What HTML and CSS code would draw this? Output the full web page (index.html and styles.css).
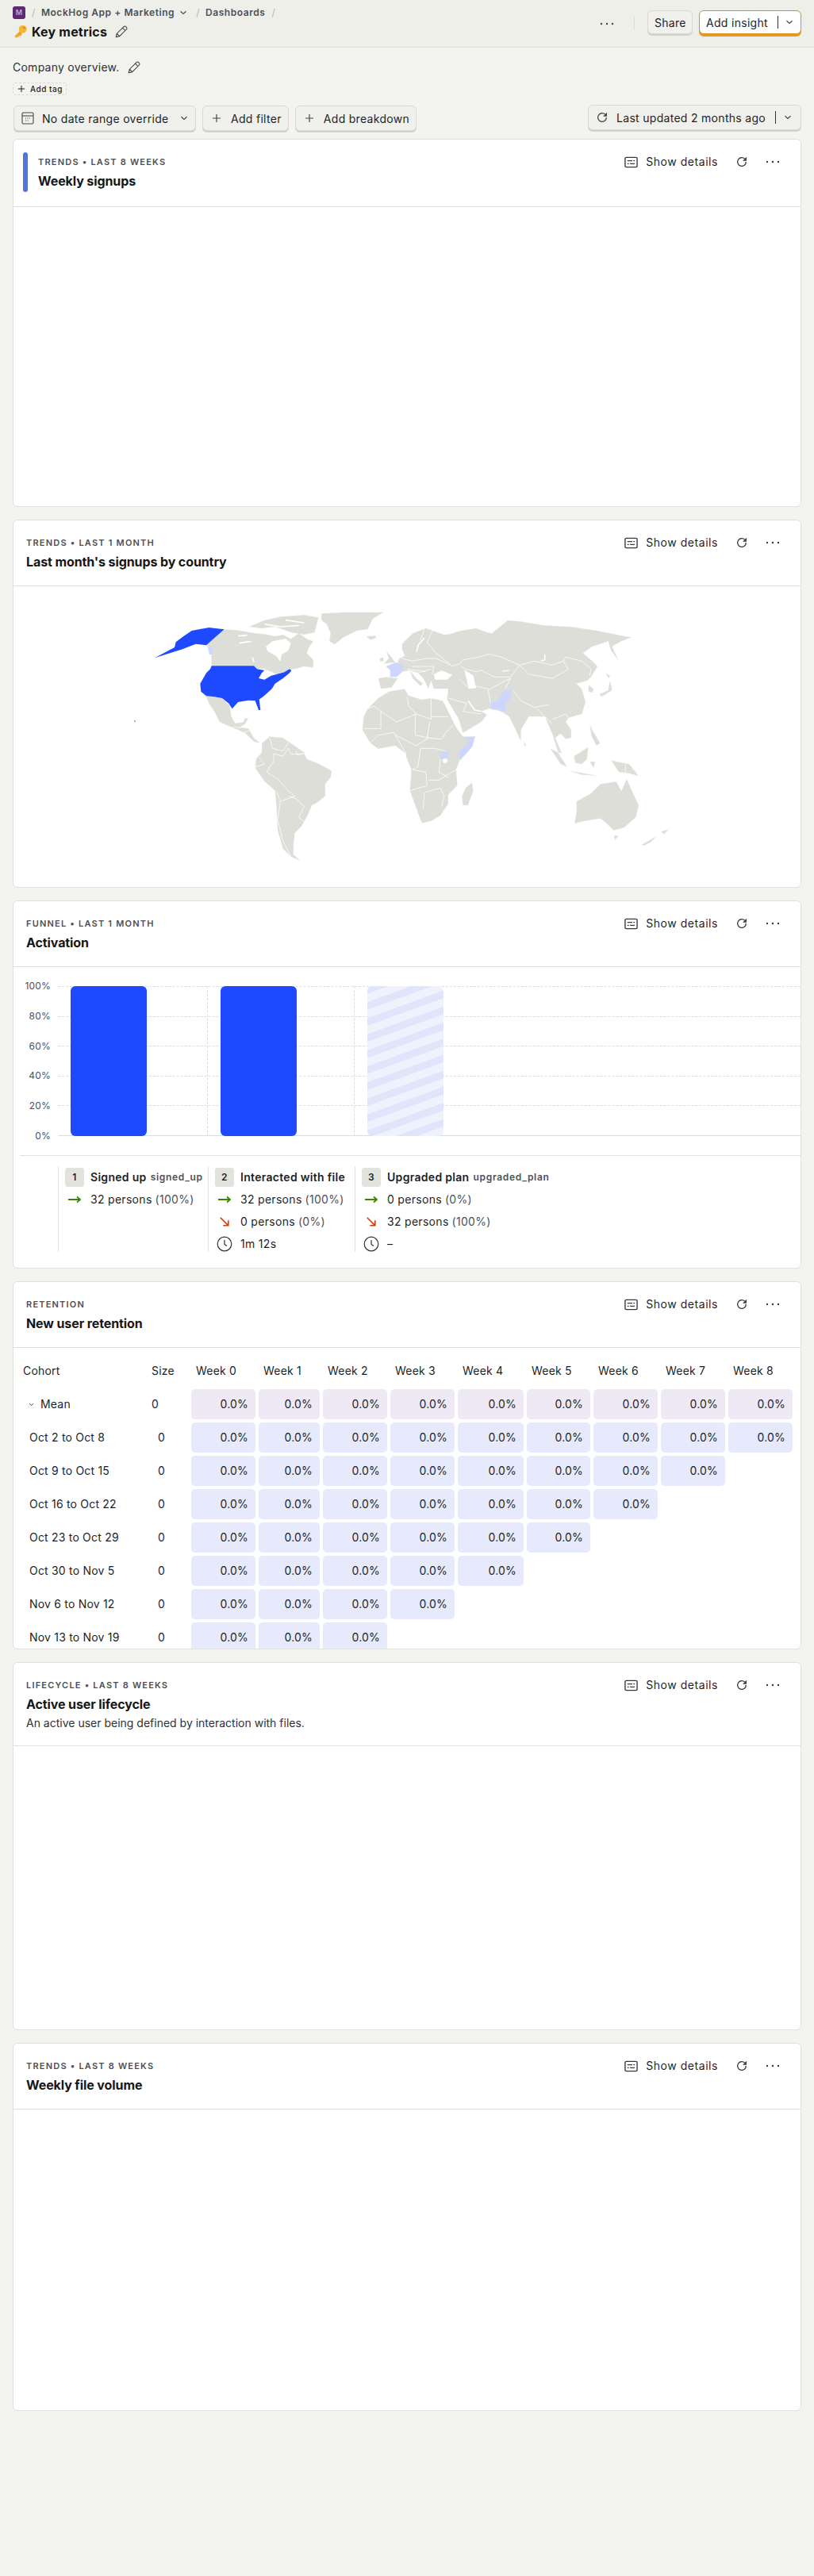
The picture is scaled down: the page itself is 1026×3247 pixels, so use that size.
FILE: index.html
```html
<!DOCTYPE html>
<html lang="en">
  <head>
    <meta charset="UTF-8" />
    <title>Key metrics</title>
    <link rel="stylesheet" href="styles.css">
  </head>
  <body>
    <svg class="icon-defs" width="0" height="0">
      <symbol id="i-pencil" viewBox="0 0 24 24"><path d="M3 21l1.5-6L16 3.5a2.4 2.4 0 0 1 3.4 0l1.1 1.1a2.4 2.4 0 0 1 0 3.4L9 19.500zM14 5.500l4.500 4.500M4.500 15l4.500 4.500" fill="none" stroke="currentColor" stroke-width="1.4" stroke-linejoin="round"/></symbol>
      <symbol id="i-refresh" viewBox="0 0 24 24"><path d="M20 12a8 8 0 1 1-2.600-5.900" fill="none" stroke="currentColor" stroke-width="2"/><path d="M21 2.500V10h-7.500z" fill="currentColor"/></symbol>
      <symbol id="i-dots" viewBox="0 0 18 4"><circle cx="2" cy="2" r="1.200" fill="currentColor"/><circle cx="9" cy="2" r="1.200" fill="currentColor"/><circle cx="16" cy="2" r="1.200" fill="currentColor"/></symbol>
      <symbol id="i-chevron" viewBox="0 0 10 6"><path d="M1.500 1.200L5 4.500l3.500-3.300" fill="none" stroke="currentColor" stroke-width="1.200"/></symbol>
      <symbol id="i-plus" viewBox="0 0 12 12"><path d="M6 1v10M1 6h10" fill="none" stroke="currentColor" stroke-width="1.200"/></symbol>
      <symbol id="i-details" viewBox="0 0 18 15"><rect x="1" y="1" width="16" height="13" rx="1.500" fill="none" stroke="currentColor" stroke-width="1.500"/><path d="M4 5.500h6.500M12 5.500h2M4 9.500h2M7.500 9.500H14" fill="none" stroke="currentColor" stroke-width="1.400"/></symbol>
      <symbol id="i-calendar" viewBox="0 0 16 16"><rect x="1" y="1" width="14" height="14" rx="1.500" fill="none" stroke="currentColor" stroke-width="1.100"/><path d="M1 5h14" stroke="currentColor" stroke-width="1.100"/><path d="M5 8h1M7.500 8h1M10 8h1M5 11h1M7.500 11h1" stroke="currentColor" stroke-width="1"/></symbol>
      <symbol id="i-right" viewBox="0 0 18 12"><path d="M1 6h15M12 2.500L16 6l-4 3.500" fill="none" stroke="#388600" stroke-width="1.800"/></symbol>
      <symbol id="i-down" viewBox="0 0 16 16"><path d="M2 2l11 11M13.500 6v7.500H6" fill="none" stroke="#db3707" stroke-width="1.800"/></symbol>
      <symbol id="i-clock" viewBox="0 0 20 20"><circle cx="10" cy="10" r="8.800" fill="none" stroke="#333" stroke-width="1.200"/><path d="M10 5v5.500l3 2" fill="none" stroke="#333" stroke-width="1.200"/></symbol>
    </svg>

    <header class="topbar">
      <div class="topbar-left">
        <div class="crumbs">
          <span class="avatar">M</span>
          <span class="slash">/</span>
          <span class="crumb">MockHog App + Marketing</span>
          <svg class="crumb-chevron"><use href="#i-chevron"/></svg>
          <span class="slash">/</span>
          <span class="crumb">Dashboards</span>
          <span class="slash">/</span>
        </div>
        <div class="page-title">
          <svg class="key" viewBox="0 0 20 20">
            <path d="M10 8L1.500 16.500l1.500 2 1.500-1 1 .5 1-1.500 1 .5 1-1.500 1 .5 2.500-2.500z" fill="#f0a52a"/>
            <circle cx="13" cy="6.500" r="5.500" fill="#f5b733"/>
            <circle cx="15" cy="4.500" r="1.400" fill="#c9861a"/>
          </svg>
          <h1>Key metrics</h1>
          <svg class="pencil"><use href="#i-pencil"/></svg>
        </div>
      </div>
      <div class="topbar-right">
        <svg class="top-dots"><use href="#i-dots"/></svg>
        <span class="vline"></span>
        <button class="btn btn-share">Share</button>
        <button class="btn btn-primary">Add insight<span class="btn-split"></span><svg class="btn-chevron"><use href="#i-chevron"/></svg></button>
      </div>
    </header>

    <main class="page">
      <div class="description">Company overview.<svg class="pencil"><use href="#i-pencil"/></svg></div>
      <div class="add-tag"><svg class="tag-plus"><use href="#i-plus"/></svg>Add tag</div>

      <div class="filters">
        <div class="filters-left">
          <button class="btn btn-date"><svg class="btn-cal"><use href="#i-calendar"/></svg>No date range override<svg class="btn-chevron date-chevron"><use href="#i-chevron"/></svg></button>
          <button class="btn btn-add"><svg class="btn-plus"><use href="#i-plus"/></svg>Add filter</button>
          <button class="btn btn-add"><svg class="btn-plus"><use href="#i-plus"/></svg>Add breakdown</button>
        </div>
        <button class="btn btn-updated"><svg class="btn-refresh"><use href="#i-refresh"/></svg>Last updated 2 months ago<span class="btn-split"></span><svg class="btn-chevron"><use href="#i-chevron"/></svg></button>
      </div>

      <div class="cards">
        <!-- weekly signups -->
        <section class="card">
          <div class="card-head">
            <span class="ribbon"></span>
            <div class="card-text">
              <div class="meta">Trends • Last 8 weeks</div>
              <h2>Weekly signups</h2>
            </div>
            <div class="card-actions">
              <svg class="a-details"><use href="#i-details"/></svg><span>Show details</span>
              <svg class="a-refresh"><use href="#i-refresh"/></svg>
              <svg class="a-dots"><use href="#i-dots"/></svg>
            </div>
          </div>
        </section>

        <!-- world map -->
        <section class="card">
          <div class="card-head">
            <div class="card-text">
              <div class="meta">Trends • Last 1 month</div>
              <h2>Last month's signups by country</h2>
            </div>
            <div class="card-actions">
              <svg class="a-details"><use href="#i-details"/></svg><span>Show details</span>
              <svg class="a-refresh"><use href="#i-refresh"/></svg>
              <svg class="a-dots"><use href="#i-dots"/></svg>
            </div>
          </div>
          <svg class="map" viewBox="0 0 2976 1137">
            <g transform="translate(249 3)">
              <g class="land">
                <polygon points="548,160 600,163 650,172 700,178 740,185 770,180 800,195 830,175 860,195 885,205 870,225 860,250 885,275 885,305 850,300 820,310 795,312 775,322 745,330 725,320 695,308 672,310 660,298 500,298 497,250 480,220"/>
                <polygon points="640,150 700,125 760,112 850,105 905,115 895,150 890,172 850,180 800,172 740,150 690,157"/>
                <polygon points="915,100 1000,95 1150,95 1110,120 1090,160 1050,165 1000,190 965,217 945,205 950,175 935,140 915,125"/>
                <polygon points="1085,187 1120,183 1122,193 1100,200"/>
                <polygon points="478,412 510,415 540,420 570,450 575,490 590,515 620,510 625,495 640,497 625,520 610,530 575,530 530,510 510,470 490,440"/>
                <polygon points="575,530 610,530 640,535 660,570 685,590 660,585 630,555 600,540"/>
                <polygon points="690,590 720,565 770,570 800,590 850,625 860,650 900,665 955,695 950,720 930,745 930,790 900,815 880,825 865,860 840,905 815,930 810,975 810,1010 835,1035 800,1020 770,990 750,920 745,830 740,770 700,735 665,685 668,650 690,625"/>
              </g>
              <g class="sea">
                <polygon points="705,225 730,205 780,195 800,212 790,240 765,255 760,282 745,262 712,242"/>
                <polyline points="600,185 635,182"/>
                <polyline points="605,212 650,205"/>
                <polyline points="700,140 760,150 830,145"/>
                <polyline points="780,125 850,135"/>
                <polyline points="655,265 660,285"/>
                <polyline points="490,225 497,250 495,300"/>
              </g>
              <polygon class="blue" points="285,268 360,228 365,208 395,185 425,165 490,153 548,160 480,220 440,215 390,235"/>
              <polygon class="blue" points="500,298 660,298 672,310 700,315 690,325 678,345 700,350 725,335 745,330 775,322 795,310 802,315 795,325 770,345 740,365 728,385 700,410 680,425 685,465 678,465 665,430 640,428 600,435 578,460 565,440 540,420 510,415 480,412 460,395 457,365 480,325 495,310"/>
              <polygon class="blue" points="207,503 213,507 210,511"/>
              <polygon class="pale" points="485,225 503,228 503,255 492,255"/>
              <g class="borders">
                <polyline points="745,770 760,810 750,880 770,960 800,1020"/>
                <polyline points="740,720 710,700 720,680 735,660 735,630 770,640 790,610 800,632 850,630"/>
                <polyline points="665,680 700,670 680,645"/>
                <polyline points="790,790 820,800 850,830 830,870 860,895 840,905"/>
                <polyline points="745,720 790,770 815,790 790,800 760,810"/>
                <polyline points="720,570 730,610 770,620 790,590"/>
                <polyline points="820,620 825,635 850,630"/>
                <polyline points="600,535 625,520"/>
                <polyline points="610,555 650,540"/>
              </g>
            </g>

            <g transform="translate(1449 3)">
              <g class="land">
                <polygon points="-70,345 -40,340 5,345 -20,380 -60,385"/>
                <polygon points="-40,240 -20,265 -5,285 -50,290 -30,270"/>
                <polygon points="-65,270 -50,265 -50,280 -62,282"/>
                <polygon points="50,315 75,345 100,365 90,375 60,345"/>
                <polygon points="-125,490 -110,460 -70,420 -30,395 30,385 45,410 95,425 130,420 175,430 200,480 225,530 250,565 295,565 285,600 240,650 225,690 230,750 195,785 195,820 165,865 130,885 95,893 75,840 50,770 55,690 35,640 35,630 -5,600 -70,612 -100,590 -130,540"/>
                <polygon points="0,290 10,270 30,260 20,235 20,215 60,175 110,155 180,180 200,178 240,165 300,155 340,170 360,175 420,125 470,130 560,145 660,150 760,165 860,185 890,190 850,205 815,225 840,280 810,240 800,205 770,215 740,225 705,250 740,280 760,300 735,340 720,355 680,365 700,385 715,435 700,480 650,495 640,510 660,540 660,570 640,575 620,555 600,570 625,630 610,625 590,560 575,525 560,490 530,490 500,490 470,540 470,585 445,530 425,490 395,470 350,460 320,470 342,482 320,510 250,552 235,500 190,425 195,385 140,385 130,355 120,385 100,345 80,325 50,315 20,320"/>
                <polygon points="285,738 290,770 270,825 250,825 247,790 260,760"/>
                <polygon points="480,582 490,600 483,603"/>
                <polygon points="765,405 800,390 805,355 795,335 810,365 815,390 775,415"/>
                <polygon points="790,325 808,335 800,345"/>
                <polygon points="725,370 745,385 740,400 725,395"/>
                <polygon points="580,610 610,625 645,680 620,670"/>
                <polygon points="645,692 700,703 770,715 700,710"/>
                <polygon points="670,640 700,620 725,605 720,650 700,670 675,665"/>
                <polygon points="730,518 740,540 770,590 755,600 735,560"/>
                <polygon points="730,660 750,660 745,685"/>
                <polygon points="810,655 880,670 915,715 880,705 840,700"/>
                <polygon points="680,810 735,780 770,745 830,735 850,770 870,725 890,770 915,825 905,870 860,910 820,920 790,890 770,875 710,885 672,895 680,850"/>
                <polygon points="820,940 840,940 825,957"/>
                <polygon points="925,975 985,940 960,965 935,978"/>
                <polygon points="1000,925 1030,915 1010,935"/>
              </g>
              <g class="sea">
                <polygon points="140,330 170,315 210,332 190,350 145,350"/>
                <polygon points="255,312 290,335 300,382 272,385 265,350"/>
                <polyline points="105,192 82,218 75,245"/>
                <polyline points="270,430 295,465 320,470"/>
                <polyline points="560,255 560,275 545,280"/>
                <polyline points="400,318 425,315"/>
              </g>
              <polygon class="pale" points="-40,300 -5,285 25,295 22,320 0,340 -25,340 -25,315"/>
              <polygon class="pale" points="355,440 385,425 410,385 435,395 425,425 410,445 415,470 395,470 375,460 360,465"/>
              <polygon class="pale" points="250,570 297,565 285,605 240,655 235,625 265,595 275,580"/>
              <polygon class="pale" points="170,622 195,620 193,645 165,653"/>
              <g class="sea"><circle cx="183" cy="657" r="9"/></g>
              <g class="borders">
                <polyline points="40,415 45,450 75,480 130,500 130,420"/>
                <polyline points="130,490 195,490"/>
                <polyline points="75,480 0,510 -60,470 -85,450 -110,460"/>
                <polyline points="70,480 70,560 120,570 75,600 -5,560"/>
                <polyline points="125,510 115,570 170,575 190,545 215,520"/>
                <polyline points="185,620 145,610 90,610 80,680 60,690 110,700 115,750 50,770"/>
                <polyline points="105,775 100,840"/>
                <polyline points="110,775 165,760 180,790 170,830"/>
                <polyline points="120,730 160,730 190,710 225,690"/>
                <polyline points="165,650 160,700 195,720"/>
                <polyline points="-125,535 -60,535 -60,470"/>
                <polyline points="-100,590 -70,560 -10,550 35,630"/>
                <polyline points="205,300 240,290 250,275 310,265 350,253 395,265 465,295 520,280 590,295 630,280 640,265 700,280 735,310 730,335"/>
                <polyline points="465,295 500,330 590,345 650,310 630,280"/>
                <polyline points="245,300 260,310 300,320 320,315 370,340 430,340 465,295"/>
                <polyline points="240,350 270,380 300,375 345,385 355,440"/>
                <polyline points="345,390 400,360 430,345 410,385"/>
                <polyline points="195,420 265,440 250,470 320,480"/>
                <polyline points="440,390 470,430 520,455 575,445"/>
                <polyline points="530,460 560,490 590,520"/>
                <polyline points="590,500 640,480 660,510"/>
                <polyline points="20,270 60,280 110,270 150,270 205,295"/>
                <polyline points="60,300 140,300 135,330"/>
                <polyline points="80,325 130,310"/>
                <polyline points="40,310 110,320"/>
                <polyline points="105,160 90,200"/>
                <polyline points="135,165 115,210 150,250 205,295"/>
                <polyline points="865,670 865,705"/>
              </g>
            </g>
          </svg>
        </section>

        <!-- funnel -->
        <section class="card">
          <div class="card-head">
            <div class="card-text">
              <div class="meta">Funnel • Last 1 month</div>
              <h2>Activation</h2>
            </div>
            <div class="card-actions">
              <svg class="a-details"><use href="#i-details"/></svg><span>Show details</span>
              <svg class="a-refresh"><use href="#i-refresh"/></svg>
              <svg class="a-dots"><use href="#i-dots"/></svg>
            </div>
          </div>
          <div class="funnel">
            <div class="funnel-axis">
              <span>100%</span><span>80%</span><span>60%</span><span>40%</span><span>20%</span><span>0%</span>
            </div>
            <div class="funnel-plot">
              <div class="gridlines"><i></i><i></i><i></i><i></i><i></i><i class="base"></i></div>
              <div class="funnel-col"><div class="bar"></div></div>
              <div class="funnel-col col-mid"><div class="bar"></div></div>
              <div class="funnel-col col-last"><div class="bar bar-empty"></div></div>
            </div>
          </div>
          <div class="legend">
            <div class="step">
              <div class="step-row"><span class="step-num">1</span><b>Signed up</b><span class="event">signed_up</span></div>
              <div class="step-row"><svg class="s-right"><use href="#i-right"/></svg>32 persons<span class="pct">(100%)</span></div>
            </div>
            <div class="step">
              <div class="step-row"><span class="step-num">2</span><b>Interacted with file</b></div>
              <div class="step-row"><svg class="s-right"><use href="#i-right"/></svg>32 persons<span class="pct">(100%)</span></div>
              <div class="step-row"><svg class="s-down"><use href="#i-down"/></svg>0 persons<span class="pct">(0%)</span></div>
              <div class="step-row"><svg class="s-clock"><use href="#i-clock"/></svg>1m 12s</div>
            </div>
            <div class="step">
              <div class="step-row"><span class="step-num">3</span><b>Upgraded plan</b><span class="event">upgraded_plan</span></div>
              <div class="step-row"><svg class="s-right"><use href="#i-right"/></svg>0 persons<span class="pct">(0%)</span></div>
              <div class="step-row"><svg class="s-down"><use href="#i-down"/></svg>32 persons<span class="pct">(100%)</span></div>
              <div class="step-row"><svg class="s-clock"><use href="#i-clock"/></svg>–</div>
            </div>
          </div>
        </section>

        <!-- retention -->
        <section class="card">
          <div class="card-head">
            <div class="card-text">
              <div class="meta">Retention</div>
              <h2>New user retention</h2>
            </div>
            <div class="card-actions">
              <svg class="a-details"><use href="#i-details"/></svg><span>Show details</span>
              <svg class="a-refresh"><use href="#i-refresh"/></svg>
              <svg class="a-dots"><use href="#i-dots"/></svg>
            </div>
          </div>
          <div class="retention">
            <div class="r-label">Cohort</div><div class="r-size">Size</div>
            <div class="r-week">Week 0</div><div class="r-week">Week 1</div><div class="r-week">Week 2</div><div class="r-week">Week 3</div><div class="r-week">Week 4</div><div class="r-week">Week 5</div><div class="r-week">Week 6</div><div class="r-week">Week 7</div><div class="r-week">Week 8</div>

            <div class="r-label r-mean"><svg class="mean-chevron"><use href="#i-chevron"/></svg>Mean</div><div class="r-size">0</div>
            <div class="r-cell mean">0.0%</div><div class="r-cell mean">0.0%</div><div class="r-cell mean">0.0%</div><div class="r-cell mean">0.0%</div><div class="r-cell mean">0.0%</div><div class="r-cell mean">0.0%</div><div class="r-cell mean">0.0%</div><div class="r-cell mean">0.0%</div><div class="r-cell mean">0.0%</div>

            <div class="r-label r-cohort">Oct 2 to Oct 8</div><div class="r-size r-num">0</div>
            <div class="r-cell">0.0%</div><div class="r-cell">0.0%</div><div class="r-cell">0.0%</div><div class="r-cell">0.0%</div><div class="r-cell">0.0%</div><div class="r-cell">0.0%</div><div class="r-cell">0.0%</div><div class="r-cell">0.0%</div><div class="r-cell">0.0%</div>

            <div class="r-label r-cohort">Oct 9 to Oct 15</div><div class="r-size r-num">0</div>
            <div class="r-cell">0.0%</div><div class="r-cell">0.0%</div><div class="r-cell">0.0%</div><div class="r-cell">0.0%</div><div class="r-cell">0.0%</div><div class="r-cell">0.0%</div><div class="r-cell">0.0%</div><div class="r-cell">0.0%</div>

            <div class="r-label r-cohort">Oct 16 to Oct 22</div><div class="r-size r-num">0</div>
            <div class="r-cell">0.0%</div><div class="r-cell">0.0%</div><div class="r-cell">0.0%</div><div class="r-cell">0.0%</div><div class="r-cell">0.0%</div><div class="r-cell">0.0%</div><div class="r-cell">0.0%</div>

            <div class="r-label r-cohort">Oct 23 to Oct 29</div><div class="r-size r-num">0</div>
            <div class="r-cell">0.0%</div><div class="r-cell">0.0%</div><div class="r-cell">0.0%</div><div class="r-cell">0.0%</div><div class="r-cell">0.0%</div><div class="r-cell">0.0%</div>

            <div class="r-label r-cohort">Oct 30 to Nov 5</div><div class="r-size r-num">0</div>
            <div class="r-cell">0.0%</div><div class="r-cell">0.0%</div><div class="r-cell">0.0%</div><div class="r-cell">0.0%</div><div class="r-cell">0.0%</div>

            <div class="r-label r-cohort">Nov 6 to Nov 12</div><div class="r-size r-num">0</div>
            <div class="r-cell">0.0%</div><div class="r-cell">0.0%</div><div class="r-cell">0.0%</div><div class="r-cell">0.0%</div>

            <div class="r-label r-cohort">Nov 13 to Nov 19</div><div class="r-size r-num">0</div>
            <div class="r-cell">0.0%</div><div class="r-cell">0.0%</div><div class="r-cell">0.0%</div>
          </div>
        </section>

        <!-- lifecycle -->
        <section class="card">
          <div class="card-head">
            <div class="card-text">
              <div class="meta">Lifecycle • Last 8 weeks</div>
              <h2>Active user lifecycle</h2>
              <p class="card-desc">An active user being defined by interaction with files.</p>
            </div>
            <div class="card-actions">
              <svg class="a-details"><use href="#i-details"/></svg><span>Show details</span>
              <svg class="a-refresh"><use href="#i-refresh"/></svg>
              <svg class="a-dots"><use href="#i-dots"/></svg>
            </div>
          </div>
        </section>

        <!-- file volume -->
        <section class="card">
          <div class="card-head">
            <div class="card-text">
              <div class="meta">Trends • Last 8 weeks</div>
              <h2>Weekly file volume</h2>
            </div>
            <div class="card-actions">
              <svg class="a-details"><use href="#i-details"/></svg><span>Show details</span>
              <svg class="a-refresh"><use href="#i-refresh"/></svg>
              <svg class="a-dots"><use href="#i-dots"/></svg>
            </div>
          </div>
        </section>
      </div>
    </main>
  </body>
</html>
```

FILE: styles.css
```css
* {
  box-sizing: border-box;
}

body,
h1,
h2,
p {
  margin: 0;
  padding: 0;
}

body {
  background-color: #f3f4ef;
  color: #1d1f27;
  font-family: Inter, "Liberation Sans", sans-serif;
  font-size: 14px;
  line-height: 20px;
}

svg {
  display: block;
  flex: none;
}

.icon-defs {
  position: absolute;
}

/* top bar */
.topbar {
  display: flex;
  justify-content: space-between;
  height: 60px;
  padding: 8px 16px 0;
  background-color: #eeefe9;
  border-bottom: 1px solid #dfe0d9;
}

.crumbs {
  display: flex;
  align-items: center;
  height: 16px;
  color: #4d4f57;
  font-size: 12px;
  font-weight: 600;
  letter-spacing: 0.55px;
}

.avatar {
  width: 16px;
  height: 16px;
  border-radius: 3px;
  background-color: #5c2b6e;
  color: #c9a2d8;
  font-size: 9px;
  line-height: 16px;
  text-align: center;
  letter-spacing: 0;
}

.slash {
  margin: 0 7px 0 8px;
  color: #b5b6b0;
  font-weight: 400;
}

.crumb-chevron {
  width: 10px;
  height: 6px;
  margin: 0 3px 0 6px;
}

.page-title {
  display: flex;
  align-items: center;
  height: 20px;
  margin-top: 6px;
}

.key {
  width: 18px;
  height: 18px;
  margin: 0 5px 0 1px;
}

.page-title h1 {
  font-size: 16px;
  font-weight: 700;
  letter-spacing: 0.2px;
  color: #151619;
}

.pencil {
  width: 18px;
  height: 18px;
  margin-left: 9px;
  color: #3a3c42;
}

.topbar-right {
  display: flex;
  align-items: flex-start;
  padding-top: 5px;
}

.top-dots {
  width: 18px;
  height: 4px;
  margin: 15px 25px 0 0;
  color: #44464d;
}

.vline {
  width: 1px;
  height: 17px;
  margin: 8px 16px 0 0;
  background-color: #dcddd6;
}

/* buttons */
.btn {
  display: flex;
  align-items: center;
  height: 32px;
  padding: 0 8px;
  border: 1px solid #d8d9d2;
  border-radius: 6px;
  background-color: #f0f1ec;
  box-shadow: 0 2px 0 #d3d0d0;
  color: #1d1f27;
  font-family: inherit;
  font-size: 14px;
  font-weight: 400;
  letter-spacing: 0.3px;
  white-space: nowrap;
}

.btn-share {
  width: 57px;
  height: 30px;
  margin-right: 8px;
}

.btn-primary {
  width: 129px;
  height: 30px;
  border-color: #d98f1e;
  background-color: #fff;
  box-shadow: 0 3px 0 #e49a22;
}

.btn-split {
  flex: none;
  width: 1px;
  height: 16px;
  margin-left: 13px;
  background-color: #333;
}

.btn-chevron {
  width: 10px;
  height: 6px;
  margin-left: 10px;
  color: #44464d;
}

.btn-primary .btn-split {
  margin-left: 12px;
}

.btn-primary .btn-chevron {
  margin-left: 9px;
}

.date-chevron {
  margin-left: 14px;
}

.btn-cal {
  width: 16px;
  height: 16px;
  margin: 0 10px 0 1px;
  color: #44464d;
}

.btn-plus {
  width: 12px;
  height: 12px;
  margin: 0 12px 0 3px;
  color: #44464d;
}

.btn-refresh {
  width: 16px;
  height: 16px;
  margin: 0 10px 0 1px;
  color: #44464d;
}

.btn-updated {
  width: 269px;
}

.btn-updated .btn-split {
  margin-left: 12px;
}

/* page */
.page {
  padding: 15px 16px 208px;
}

.description {
  display: flex;
  align-items: center;
  color: #2e3036;
  letter-spacing: 0.25px;
}

.description .pencil {
  margin-left: 9px;
}

.add-tag {
  display: flex;
  align-items: center;
  width: 68px;
  height: 16px;
  margin-top: 9px;
  padding-left: 5px;
  border: 1px dashed #d8d9d2;
  border-radius: 3px;
  font-size: 10px;
  font-weight: 500;
  letter-spacing: 0.5px;
}

.tag-plus {
  width: 10px;
  height: 10px;
  margin-right: 6px;
}

.filters {
  display: flex;
  justify-content: space-between;
  align-items: flex-start;
  margin-top: 12px;
  padding-left: 1px;
}

.filters-left {
  display: flex;
  gap: 8px;
  padding-top: 1px;
}

.btn-date {
  width: 230px;
}

/* cards */
.cards {
  display: grid;
  gap: 16px;
  margin-top: 10px;
}

.card {
  height: 464px;
  overflow: hidden;
  background-color: #fff;
  border: 1px solid #dfe0d9;
  border-radius: 6px;
}

.card-head {
  display: flex;
  padding: 20px 26px 18px 16px;
  border-bottom: 1px solid #dfe0d9;
}

.ribbon {
  flex: none;
  width: 6px;
  height: 50px;
  margin: -4px 13px 0 -4px;
  border-radius: 3px;
  background-color: #5375d6;
}

.card-text {
  flex: 1;
}

.meta {
  color: #4d4f57;
  font-size: 11px;
  font-weight: 600;
  line-height: 16px;
  letter-spacing: 1.2px;
  text-transform: uppercase;
}

.card h2 {
  margin-top: 4px;
  color: #151619;
  font-size: 16px;
  font-weight: 700;
  line-height: 24px;
  letter-spacing: -0.1px;
}

.card-desc {
  margin-top: 2px;
  color: #2e3036;
}

.card-actions {
  display: flex;
  align-items: center;
  align-self: flex-start;
  height: 16px;
  letter-spacing: 0.55px;
}

.a-details {
  width: 17px;
  height: 15px;
  margin-right: 10px;
  color: #3a3c42;
}

.a-refresh {
  width: 16px;
  height: 16px;
  margin: 0 22px;
  color: #3a3c42;
}

.a-dots {
  width: 18px;
  height: 4px;
  color: #3a3c42;
}

/* map */
.map {
  width: 992px;
  height: 379px;
}

.land polygon {
  fill: #dcded7;
  stroke: #fff;
  stroke-width: 1;
}

.sea polygon,
.sea circle {
  fill: #fff;
}

.sea polyline {
  fill: none;
  stroke: #fff;
  stroke-width: 5;
}

.blue {
  fill: #1d4aff;
}

.pale {
  fill: #cdd6ff;
}

.borders polyline {
  fill: none;
  stroke: #fff;
  stroke-width: 2.400;
}

/* funnel */
.funnel {
  display: flex;
  height: 238px;
  padding-top: 24px;
  border-bottom: 1px solid #dfe0d9;
  margin-left: 8px;
}

.funnel-axis {
  display: flex;
  flex-direction: column;
  justify-content: space-between;
  flex: none;
  width: 39px;
  height: 189px;
  color: #4d4f57;
  font-size: 12px;
  line-height: 0;
  letter-spacing: 0.2px;
  text-align: right;
}

.funnel-plot {
  position: relative;
  display: flex;
  flex: 1;
  height: 189px;
  margin-left: 9px;
}

.gridlines {
  position: absolute;
  inset: 0;
  display: flex;
  flex-direction: column;
  justify-content: space-between;
}

.gridlines i {
  display: block;
  height: 0;
  border-top: 1px dashed #dcddd6;
}

.gridlines .base {
  border-top: 1px solid #dcddd6;
}

.funnel-col {
  position: relative;
  width: 189px;
  padding-left: 16px;
  border-right: 1px dashed #dcddd6;
}

.col-mid {
  width: 185px;
}

.col-last {
  flex: 1;
  border-right: 0;
}

.bar {
  width: 96px;
  height: 189px;
  border-radius: 6px;
  background-color: #1d4aff;
}

.bar-empty {
  background: repeating-linear-gradient(160deg, #e0e5fb 0 9px, #eff1fc 9px 19px);
}

.legend {
  display: flex;
  margin: 13px 0 0 56px;
}

.step {
  flex: none;
  width: 185px;
  height: 108px;
  padding-left: 8px;
  border-left: 1px solid #dfe0d9;
}

.step:first-child {
  width: 189px;
}

.step:last-child {
  width: auto;
}

.step-row {
  display: flex;
  align-items: center;
  height: 28px;
  letter-spacing: 0.3px;
  white-space: nowrap;
}

.step-row b {
  font-weight: 600;
}

.step-num {
  flex: none;
  width: 24px;
  height: 24px;
  margin-right: 8px;
  border-radius: 3px;
  background-color: #e2e3dd;
  font-size: 12px;
  font-weight: 600;
  line-height: 24px;
  text-align: center;
}

.event {
  margin-left: 5px;
  color: #4d4f57;
  font-size: 12px;
  font-weight: 600;
  letter-spacing: 0.7px;
}

.pct {
  margin-left: 4px;
  color: #4d4f57;
}

.s-right {
  width: 18px;
  height: 12px;
  margin: 0 11px 0 3px;
}

.s-down {
  width: 14px;
  height: 14px;
  margin: 0 13px 0 5px;
}

.s-clock {
  width: 20px;
  height: 20px;
  margin: 0 10px 0 2px;
}

/* retention */
.retention {
  display: grid;
  grid-template-columns: 158px 46px 81px 77px 81px 81px 83px 80px 81px 81px 81px;
  grid-auto-rows: 38px;
  gap: 4px;
  padding: 10px 0 0 12px;
  line-height: 38px;
  letter-spacing: 0.2px;
}

.r-label {
  grid-column: 1;
}

.r-mean {
  display: flex;
  align-items: center;
  padding-left: 7px;
}

.mean-chevron {
  width: 7px;
  height: 5px;
  margin-right: 8px;
}

.r-cohort {
  padding-left: 8px;
}

.r-num {
  padding-left: 8px;
}

.r-week {
  padding-left: 6px;
}

.r-cell {
  padding-right: 9px;
  border-radius: 5px;
  background-color: #e6eafc;
  text-align: right;
}

.r-cell.mean {
  background-color: #eee9f5;
}
```
